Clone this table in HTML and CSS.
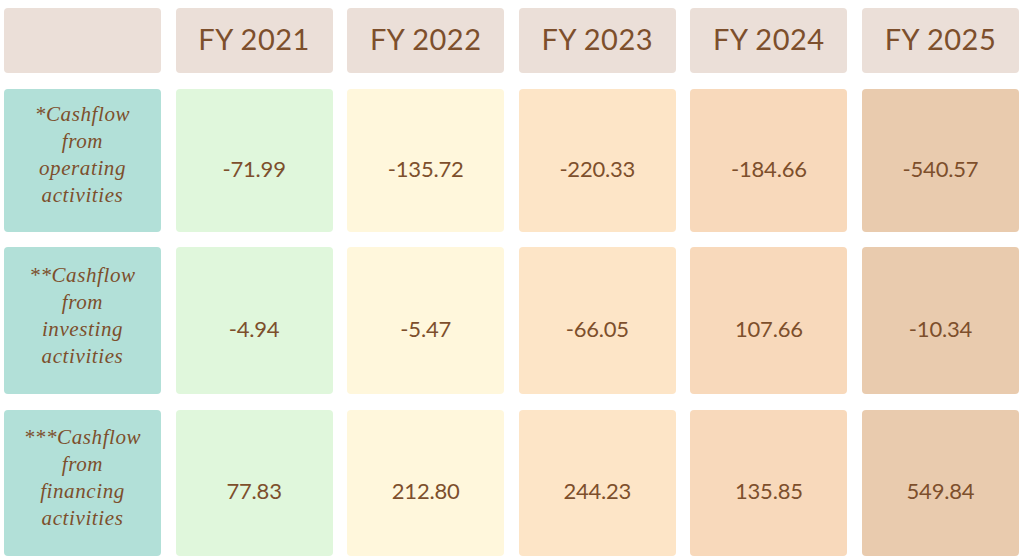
FILE: index.html
```html
<!DOCTYPE html>
<html lang="en">
<head>
<meta charset="utf-8">
<title>Cashflow</title>
<link rel="stylesheet" href="styles.css">
</head>
<body>
<div class="grid">
  <div class="cell head"></div>
  <div class="cell head">FY 2021</div>
  <div class="cell head">FY 2022</div>
  <div class="cell head">FY 2023</div>
  <div class="cell head">FY 2024</div>
  <div class="cell head">FY 2025</div>

  <div class="cell label">*Cashflow<br>from<br>operating<br>activities</div>
  <div class="cell val c1">-71.99</div>
  <div class="cell val c2">-135.72</div>
  <div class="cell val c3">-220.33</div>
  <div class="cell val c4">-184.66</div>
  <div class="cell val c5">-540.57</div>

  <div class="cell label">**Cashflow<br>from<br>investing<br>activities</div>
  <div class="cell val c1">-4.94</div>
  <div class="cell val c2">-5.47</div>
  <div class="cell val c3">-66.05</div>
  <div class="cell val c4">107.66</div>
  <div class="cell val c5">-10.34</div>

  <div class="cell label">***Cashflow<br>from<br>financing<br>activities</div>
  <div class="cell val c1">77.83</div>
  <div class="cell val c2">212.80</div>
  <div class="cell val c3">244.23</div>
  <div class="cell val c4">135.85</div>
  <div class="cell val c5">549.84</div>
</div>
</body>
</html>
```
FILE: styles.css
```css
html, body {
  margin: 0;
  padding: 0;
  background: #ffffff;
}
.grid {
  display: grid;
  grid-template-columns: repeat(6, 157px);
  grid-template-rows: 65px 143px 147px 146px;
  column-gap: 14.6px;
  row-gap: 15.5px;
  padding: 8px 0 0 4px;
  color: #7d4f2c;
}
.cell {
  border-radius: 4px;
  display: flex;
  align-items: center;
  justify-content: center;
  text-align: center;
}
.head {
  background: #ebdfd8;
  font-family: Lato, "Open Sans", sans-serif;
  font-weight: 400;
  font-size: 29px;
  letter-spacing: 0.5px;
  padding-bottom: 4px;
  box-sizing: border-box;
}
.label {
  background: #b2e0d8;
  font-family: "Liberation Serif", serif;
  font-style: italic;
  font-weight: 400;
  font-size: 21px;
  line-height: 27px;
  letter-spacing: 0.6px;
  padding-bottom: 10px;
  box-sizing: border-box;
}
.val {
  font-family: Lato, "Open Sans", sans-serif;
  font-weight: 400;
  font-size: 22px;
  letter-spacing: -0.2px;
  padding-top: 16px;
  box-sizing: border-box;
}
.c1 { background: #e0f7dc; }
.c2 { background: #fff7dc; }
.c3 { background: #fde5c7; }
.c4 { background: #f8d9bb; }
.c5 { background: #e9cbae; }
```
